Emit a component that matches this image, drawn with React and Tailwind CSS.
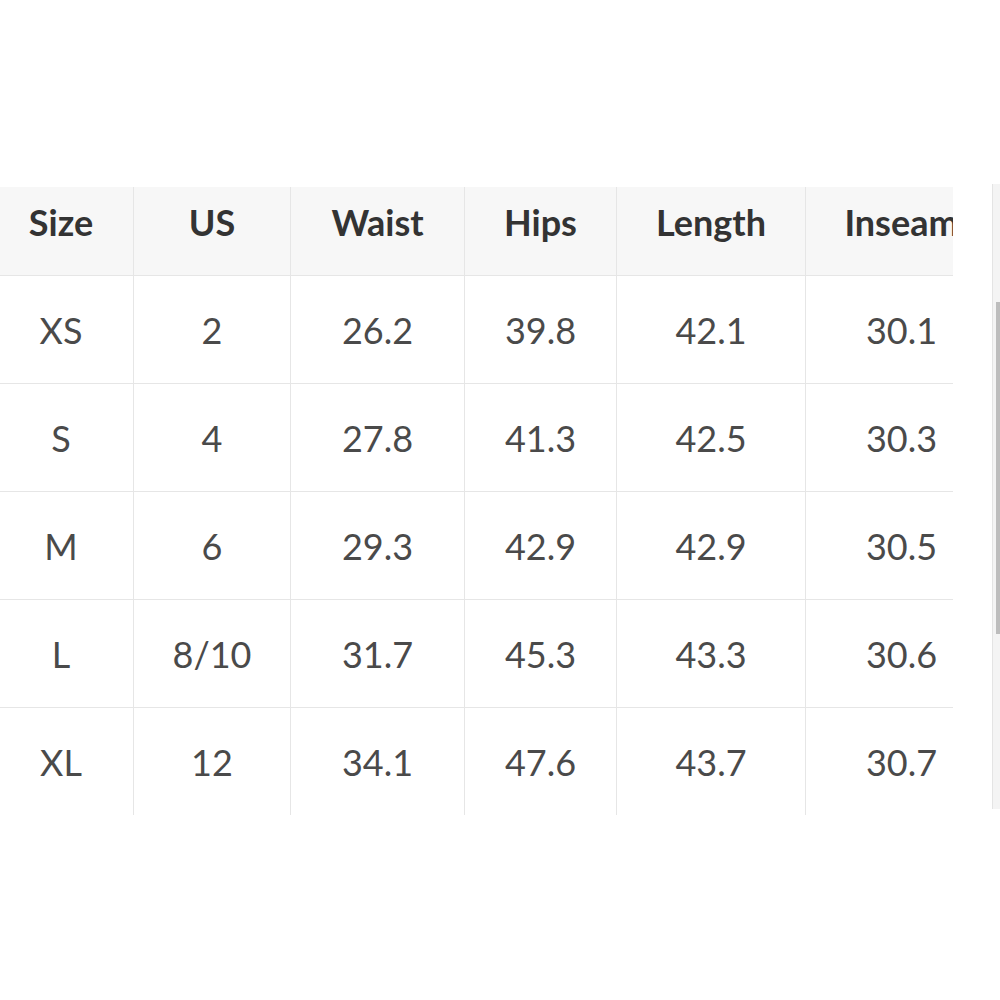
import React from "react";

const headers = ["Size", "US", "Waist", "Hips", "Length", "Inseam"];
const rows = [
  ["XS", "2", "26.2", "39.8", "42.1", "30.1"],
  ["S", "4", "27.8", "41.3", "42.5", "30.3"],
  ["M", "6", "29.3", "42.9", "42.9", "30.5"],
  ["L", "8/10", "31.7", "45.3", "43.3", "30.6"],
  ["XL", "12", "34.1", "47.6", "43.7", "30.7"],
];

export default function App() {
  return (
    <div
      className="w-[1000px] h-[1000px] bg-white overflow-hidden"
      style={{ fontFamily: "Lato, 'Open Sans', sans-serif" }}
    >
      <div className="pt-[187px] flex items-start">
        <div className="w-[953px] overflow-hidden shrink-0">
          <div className="ml-[-11px] w-[1008px] grid grid-cols-[144px_157px_174px_152px_189px_192px]">
            {headers.map((h, i) => (
              <div
                key={h}
                className={`h-[88px] bg-[#f7f7f7] flex items-center justify-center pb-[18px] text-[36px] font-bold text-[#333333] whitespace-nowrap ${
                  i > 0 ? "border-l border-[#e6e6e6]" : ""
                }`}
              >
                {h}
              </div>
            ))}
            {rows.map((r, ri) =>
              r.map((c, i) => (
                <div
                  key={ri + "-" + i}
                  className={`h-[108px] border-t border-[#e6e6e6] flex items-center justify-center text-[36px] text-[#4a4a4a] whitespace-nowrap ${
                    i > 0 ? "border-l" : ""
                  }`}
                >
                  {c}
                </div>
              ))
            )}
          </div>
        </div>
        <div className="ml-[39px] mt-[-3px] w-[8px] h-[625px] bg-[#f4f4f4] border-l border-[#e4e4e4] flex justify-end">
          <div className="mt-[118px] w-[4px] h-[332px] bg-[#bdbdbd]" />
        </div>
      </div>
    </div>
  );
}
